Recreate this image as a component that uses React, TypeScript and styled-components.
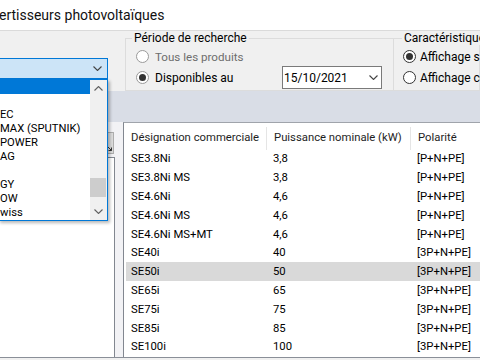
import React from 'react';
import styled, { createGlobalStyle } from 'styled-components';

const GlobalStyle = createGlobalStyle`
  html, body {
    margin: 0;
    padding: 0;
    background: #f0f0f0;
  }
  body {
    font-family: Roboto, "Liberation Sans", sans-serif;
  }
`;

const Window = styled.div`
  width: 480px;
  height: 360px;
  overflow: hidden;
  background: #f0f0f0;
  font-size: 12px;
  color: #000;
  display: flex;
  flex-direction: column;
`;

const TitleBar = styled.div`
  height: 30px;
  flex: none;
  background: #fff;
  border-bottom: 1px solid #dadada;
  display: flex;
  align-items: center;
`;

const Title = styled.span`
  margin-left: -1px;
  padding-bottom: 1px;
  font-size: 14px;
  color: #111;
  white-space: nowrap;
`;

const FilterRow = styled.div`
  height: 60px;
  flex: none;
  display: flex;
`;

const ComboZone = styled.div`
  width: 125px;
  flex: none;
  padding-top: 27px;
  box-sizing: border-box;
`;

const ComboBox = styled.div`
  position: relative;
  width: 110px;
  height: 21px;
  margin-left: -2px;
  box-sizing: border-box;
  border: 1px solid #0078d7;
  background: #cce4f7;
  display: flex;
  align-items: center;
  justify-content: flex-end;
  padding-right: 5px;
`;

const DropList = styled.div`
  position: absolute;
  top: 20px;
  left: -1px;
  width: 110px;
  height: 142px;
  box-sizing: border-box;
  border: 1px solid #0078d7;
  background: #fff;
  box-shadow: 2px 2px 3px rgba(0, 0, 0, 0.28);
  display: flex;
  z-index: 5;
  font-size: 11.2px;
`;

const DropItems = styled.div`
  flex: 1;
  min-width: 0;
  overflow: hidden;
`;

const DropItem = styled.div<{ $selected?: boolean }>`
  height: 14px;
  line-height: 14px;
  padding-left: 1px;
  white-space: nowrap;
  color: ${(p) => (p.$selected ? '#fff' : '#000')};
  background: ${(p) => (p.$selected ? '#0078d7' : 'transparent')};
`;

const ScrollBar = styled.div`
  width: 17px;
  flex: none;
  background: #f0f0f0;
  display: flex;
  flex-direction: column;
`;

const ScrollButton = styled.div`
  height: 17px;
  flex: none;
  display: flex;
  align-items: center;
  justify-content: center;
`;

const ScrollTrack = styled.div`
  flex: 1;
`;

const ScrollThumb = styled.div`
  margin-top: 81px;
  width: 16px;
  height: 19px;
  background: #cdcdcd;
`;

const GroupBox = styled.fieldset<{ $width?: number; $open?: boolean }>`
  margin: 0;
  padding: 0;
  min-width: 0;
  height: 60px;
  box-sizing: border-box;
  border: 1px solid #dcdcdc;
  ${(p) => (p.$open ? 'border-right: none;' : '')}
  ${(p) => (p.$width ? `width: ${p.$width}px; flex: none;` : 'flex: 1;')}
`;

const Legend = styled.legend<{ $indent: number }>`
  margin-left: ${(p) => p.$indent}px;
  padding: 0 2px;
  font-size: 12px;
  line-height: 14px;
  white-space: nowrap;
`;

const Options = styled.div<{ $pad: number }>`
  margin-top: 1px;
  padding-left: ${(p) => p.$pad}px;
`;

const OptionRow = styled.div`
  height: 21px;
  display: flex;
  align-items: center;
  white-space: nowrap;
`;

const RadioCircle = styled.span<{ $muted?: boolean; $gap: number }>`
  width: 13px;
  height: 13px;
  flex: none;
  box-sizing: border-box;
  border-radius: 50%;
  border: 1px solid ${(p) => (p.$muted ? '#9a9a9a' : '#333')};
  background: #fff;
  margin-right: ${(p) => p.$gap}px;
  display: flex;
  align-items: center;
  justify-content: center;
`;

const RadioDot = styled.span`
  width: 7px;
  height: 7px;
  border-radius: 50%;
  background: #333;
`;

const OptionLabel = styled.span<{ $dim?: boolean }>`
  color: ${(p) => (p.$dim ? '#6d6d6d' : '#000')};
  font-size: ${(p) => (p.$dim ? '11.6px' : '12px')};
`;

const DateBox = styled.div`
  margin-left: auto;
  margin-right: 11px;
  width: 100px;
  height: 23px;
  flex: none;
  box-sizing: border-box;
  border: 1px solid #7a7a7a;
  background: #fff;
  display: flex;
  align-items: center;
  justify-content: space-between;
  padding: 0 3px 0 1px;
  font-size: 12px;
`;

const Band = styled.div`
  height: 31px;
  flex: none;
  background: #d9dde6;
`;

const Content = styled.div`
  height: 236px;
  flex: none;
  box-sizing: border-box;
  border-bottom: 1px solid #8a8f98;
  display: flex;
`;

const SideColumn = styled.div`
  width: 123px;
  flex: none;
  display: flex;
  flex-direction: column;
  background: #f2f2f5;
`;

const ToolButton = styled.div`
  margin: 10px 0 0 96px;
  width: 18px;
  height: 22px;
  box-sizing: border-box;
  border: 1px solid #adadad;
  background: #dcdcdc;
  display: flex;
  align-items: flex-end;
  justify-content: flex-end;
  padding: 0 1px 2px 0;
`;

const SidePanel = styled.div`
  margin: 3px 0 0 -1px;
  width: 116px;
  flex: 1;
  box-sizing: border-box;
  border: 1px solid #828790;
  border-bottom: none;
  background: #fff;
`;

const TablePanel = styled.div`
  flex: 1;
  min-width: 0;
  border-left: 1px solid #828790;
  border-top: 1px solid #a0a4ab;
  background: #fff;
  overflow: hidden;
  font-size: 11.3px;
`;

const HeaderRow = styled.div`
  height: 26px;
  display: flex;
  color: #1e1e1e;
`;

const HeaderCell = styled.div<{ $width?: number; $last?: boolean }>`
  margin-top: 4px;
  height: 23px;
  line-height: 22px;
  box-sizing: border-box;
  padding-left: 7px;
  white-space: nowrap;
  ${(p) => (p.$last ? 'flex: 1;' : `width: ${p.$width}px; flex: none; border-right: 1px solid #e5e5e5;`)}
`;

const Row = styled.div<{ $selected?: boolean }>`
  height: 18.8px;
  margin-left: 2px;
  display: flex;
  align-items: center;
  background: ${(p) => (p.$selected ? '#d9d9d9' : 'transparent')};
`;

const Cell = styled.div<{ $width?: number; $pad: number }>`
  padding-left: ${(p) => p.$pad}px;
  padding-top: 1px;
  box-sizing: border-box;
  white-space: nowrap;
  ${(p) => (p.$width ? `width: ${p.$width}px; flex: none;` : 'flex: 1;')}
`;

function Chevron({ up, color = '#444' }: { up?: boolean; color?: string }) {
  return (
    <svg width="9" height="5" viewBox="0 0 9 5">
      <polyline
        points={up ? '0.5,4.5 4.5,0.5 8.5,4.5' : '0.5,0.5 4.5,4.5 8.5,0.5'}
        fill="none"
        stroke={color}
        strokeWidth="1.1"
      />
    </svg>
  );
}

function Radio({
  label,
  checked,
  muted,
  dim,
  gap
}: {
  label: string;
  checked?: boolean;
  muted?: boolean;
  dim?: boolean;
  gap: number;
}) {
  return (
    <>
      <RadioCircle $muted={muted} $gap={gap}>
        {checked && <RadioDot />}
      </RadioCircle>
      <OptionLabel $dim={dim}>{label}</OptionLabel>
    </>
  );
}

const fabricants = ['', '', 'EC', 'MAX (SPUTNIK)', 'POWER', 'AG', '', 'GY', 'OW', 'wiss'];

const onduleurs: Array<{ id: number; name: string; power: string; polarity: string }> = [
  { id: 1, name: 'SE3.8Ni', power: '3,8', polarity: '[P+N+PE]' },
  { id: 2, name: 'SE3.8Ni MS', power: '3,8', polarity: '[P+N+PE]' },
  { id: 3, name: 'SE4.6Ni', power: '4,6', polarity: '[P+N+PE]' },
  { id: 4, name: 'SE4.6Ni MS', power: '4,6', polarity: '[P+N+PE]' },
  { id: 5, name: 'SE4.6Ni MS+MT', power: '4,6', polarity: '[P+N+PE]' },
  { id: 6, name: 'SE40i', power: '40', polarity: '[3P+N+PE]' },
  { id: 7, name: 'SE50i', power: '50', polarity: '[3P+N+PE]' },
  { id: 8, name: 'SE65i', power: '65', polarity: '[3P+N+PE]' },
  { id: 9, name: 'SE75i', power: '75', polarity: '[3P+N+PE]' },
  { id: 10, name: 'SE85i', power: '85', polarity: '[3P+N+PE]' },
  { id: 11, name: 'SE100i', power: '100', polarity: '[3P+N+PE]' }
];

export default function App() {
  return (
    <>
      <GlobalStyle />
      <Window>
        <TitleBar>
          <Title>ertisseurs photovoltaïques</Title>
        </TitleBar>

        <FilterRow>
          <ComboZone>
            <ComboBox>
              <Chevron />
              <DropList>
                <DropItems>
                  {fabricants.map((name, i) => (
                    <DropItem key={i} $selected={i === 0}>
                      {name}
                    </DropItem>
                  ))}
                </DropItems>
                <ScrollBar>
                  <ScrollButton>
                    <Chevron up color="#606060" />
                  </ScrollButton>
                  <ScrollTrack>
                    <ScrollThumb />
                  </ScrollTrack>
                  <ScrollButton>
                    <Chevron color="#606060" />
                  </ScrollButton>
                </ScrollBar>
              </DropList>
            </ComboBox>
          </ComboZone>

          <GroupBox $width={268} $open>
            <Legend $indent={6}>Période de recherche</Legend>
            <Options $pad={10}>
              <OptionRow>
                <Radio label="Tous les produits" muted dim gap={6} />
              </OptionRow>
              <OptionRow>
                <Radio label="Disponibles au" checked muted gap={6} />
                <DateBox>
                  <span>15/10/2021</span>
                  <Chevron />
                </DateBox>
              </OptionRow>
            </Options>
          </GroupBox>

          <GroupBox>
            <Legend $indent={8}>Caractéristiques</Legend>
            <Options $pad={9}>
              <OptionRow>
                <Radio label="Affichage simplifié" checked gap={4} />
              </OptionRow>
              <OptionRow>
                <Radio label="Affichage complet" gap={4} />
              </OptionRow>
            </Options>
          </GroupBox>
        </FilterRow>

        <Band />

        <Content>
          <SideColumn>
            <ToolButton>
              <svg width="5" height="5" viewBox="0 0 5 5">
                <path d="M0.5 0.5 L4.5 4.5 M4.5 1.5 V4.5 H1.5" fill="none" stroke="#333" strokeWidth="1" />
              </svg>
            </ToolButton>
            <SidePanel />
          </SideColumn>

          <TablePanel>
            <HeaderRow>
              <HeaderCell $width={143}>Désignation commerciale</HeaderCell>
              <HeaderCell $width={144}>Puissance nominale (kW)</HeaderCell>
              <HeaderCell $last>Polarité</HeaderCell>
            </HeaderRow>
            {onduleurs.map((o) => (
              <Row key={o.id} $selected={o.name === 'SE50i'}>
                <Cell $width={140} $pad={5}>
                  {o.name}
                </Cell>
                <Cell $width={144} $pad={7}>
                  {o.power}
                </Cell>
                <Cell $pad={7}>{o.polarity}</Cell>
              </Row>
            ))}
          </TablePanel>
        </Content>
      </Window>
    </>
  );
}
